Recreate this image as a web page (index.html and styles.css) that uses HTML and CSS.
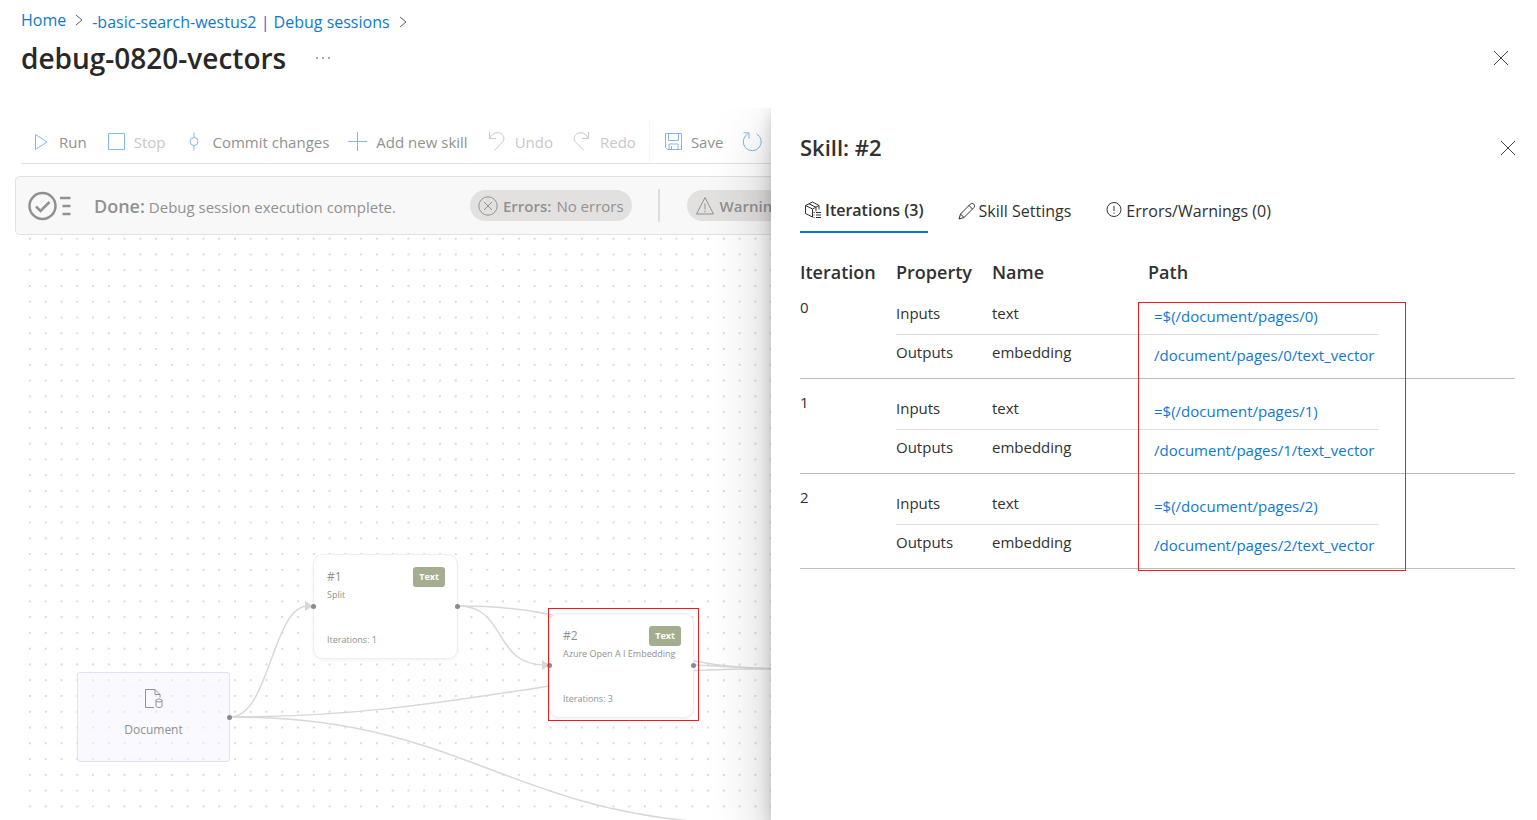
FILE: index.html
```html
<!DOCTYPE html>
<html lang="en">

<head>
  <meta charset="utf-8">
  <title>debug-0820-vectors</title>
  <link rel="stylesheet" href="styles.css">
</head>

<body>
  <header class="top">
    <nav class="crumbs">
      <a href="#">Home</a>
      <svg class="chev" viewBox="0 0 8 12"><path d="M1 1l6 5-6 5" /></svg>
      <a href="#" class="crumb-low">-basic-search-westus2 | Debug sessions</a>
      <svg class="chev crumb-low" viewBox="0 0 8 12"><path d="M1 1l6 5-6 5" /></svg>
    </nav>
    <div class="title-row">
      <h1>debug-0820-vectors</h1>
      <button class="more" aria-label="More"><svg viewBox="0 0 14 4"><circle cx="1" cy="2" r=".8" /><circle cx="7" cy="2" r=".8" /><circle cx="13" cy="2" r=".8" /></svg></button>
      <button class="close" aria-label="Close"><svg viewBox="0 0 14 14"><path d="M0 0l14 14M14 0L0 14" /></svg></button>
    </div>
  </header>

  <main class="main">
    <section class="work">
      <div class="toolbar">
        <button><svg viewBox="0 0 20 20"><path d="M4.500 2.500v15L16 10z" /></svg>Run</button>
        <button disabled><svg viewBox="0 0 20 20"><path d="M2.500 1.500h16v16h-16z" /></svg>Stop</button>
        <button><svg viewBox="0 0 20 20"><circle cx="10" cy="9.500" r="4" /><path d="M10 .5v5M10 13.500v5" /></svg>Commit changes</button>
        <button><svg viewBox="0 0 20 20"><path d="M0 9.500h19M9.500 0v19" /></svg>Add new skill</button>
        <button disabled><svg viewBox="0 0 20 20" class="off"><path d="M2.500 0v6.500H9M3 6C6 0 12-.5 15 2.500c3 3 2 6 0 8L7.500 18.500" /></svg>Undo</button>
        <button disabled><svg viewBox="0 0 20 20" class="off"><path d="M16.500 0v6.500H10M16 6C13 0 7-.5 4 2.500c-3 3-2 6 0 8l8 8" /></svg>Redo</button>
        <span class="sep"></span>
        <button><svg viewBox="0 0 20 20"><path d="M2.500 1.500h16v16H4.500l-2-2zM5.500 1.500v7h10v-7M6 17.500v-5.500h9v5.500M8.500 17v-3" /></svg>Save</button>
        <button aria-label="Refresh"><svg viewBox="0 0 20 20"><path d="M6 1.800a9 9 0 1 0 8.500 0M1.500 .8H7v5.700" /></svg></button>
      </div>

      <div class="status">
        <svg class="done-icon" viewBox="0 0 44 30"><circle cx="14.500" cy="15" r="13" /><path d="M8 15.500l4.500 4.500 9-9" /><path d="M32 7h10.500M34.500 15h8M34.500 23h8" /></svg>
        <p><b>Done:</b> Debug session execution complete.</p>
        <span class="pill"><svg viewBox="0 0 20 20"><circle cx="10" cy="10" r="9.200" /><path d="M6 6l8 8M14 6l-8 8" /></svg><b>Errors:</b> No errors</span>
        <span class="bar"></span>
        <span class="pill"><svg viewBox="0 0 20 20"><path d="M10 1.500L18.500 18h-17zM10 7.500v6M10 14.800v1.500" /></svg><b>Warnings:</b></span>
      </div>

      <div class="canvas">
        <svg class="edges">
          <defs>
            <pattern id="dots" x="29" y="2.700" width="15.770" height="15.770" patternUnits="userSpaceOnUse">
              <circle cx="0.700" cy="0.700" r="0.600" fill="#d6d6da" />
            </pattern>
          </defs>
          <rect class="grid" x="22" y="0" width="100%" height="100%" fill="url(#dots)" />
          <path d="M230 482C270 482 272 371 308 371" />
          <path d="M230 482C360 482 450 466 550 451" />
          <path d="M230 482C450 482 500 568 690 586" />
          <path d="M458 371C508 371 492 430 545 430" />
          <path d="M458 371C495 371 525 374 553 380" />
          <path d="M694 430C720 431 740 433 790 434M694 426C720 431 740 433 790 434M694 435.500C720 435 750 433 790 434" />
          <path class="tip" d="M305 366v10l8-5zM542 425v10l8-5z" />
        </svg>

        <div class="node doc">
          <svg viewBox="0 0 20 22"><path d="M10 19.500H1.500v-18h9.500l5 5v3M11 1.500v5h5" /><path d="M12 12.500v5.500c0 2 6 2 6 0v-5.500M12 12.500c0-2 6-2 6 0s-6 2-6 0z" /></svg>
          Document
          <i class="port out"></i>
        </div>

        <div class="node skill one">
          <div class="row"><span class="num">#1</span><span class="tag">Text</span></div>
          <span>Split</span>
          <span class="count">Iterations: 1</span>
          <i class="port in"></i><i class="port out"></i>
        </div>

        <div class="node skill two">
          <div class="row"><span class="num">#2</span><span class="tag">Text</span></div>
          <span>Azure Open A I Embedding</span>
          <span class="count">Iterations: 3</span>
          <i class="port in"></i><i class="port out"></i>
        </div>
        <div class="mark mark-node"></div>
      </div>
    </section>

    <aside class="panel">
      <div class="panel-head">
        <h2>Skill: #2</h2>
        <button class="close" aria-label="Close panel"><svg viewBox="0 0 14 14"><path d="M0 0l14 14M14 0L0 14" /></svg></button>
      </div>

      <div class="tabs">
        <button class="tab active"><svg viewBox="0 0 18 18"><path d="M8.500 16L1.500 12.500v-8L8.500 1l6.500 3.500v4M1.500 4.500l7 3.500L15 4.500M8.500 8v8M5 2.800l7 3.500v4M9.500 11.500h1M12 11.500h5M9.500 14h1M12 14h5M9.500 16.500h1M12 16.500h5" /></svg>Iterations (3)</button>
        <button class="tab"><svg viewBox="0 0 18 18"><path d="M1 17l1.500-5L12.500 2c2-2 5.500 1 3.500 3.500L6 15.500zM2.500 12L6 15.500M11 3.500L14.500 7" /></svg>Skill Settings</button>
        <button class="tab"><svg viewBox="0 0 18 18"><circle cx="9" cy="7.500" r="7" /><path d="M9 4v5M9 10.500v1.300" /></svg>Errors/Warnings (0)</button>
      </div>

      <div class="table-wrap">
        <table>
          <thead>
            <tr><th class="c-it">Iteration</th><th class="c-prop">Property</th><th class="c-name">Name</th><th class="c-path">Path</th><th></th></tr>
          </thead>
          <tbody>
            <tr><td rowspan="2" class="it">0</td><td>Inputs</td><td>text</td><td class="path"><a href="#">=$(/document/pages/0)</a></td><td rowspan="2"></td></tr>
            <tr><td>Outputs</td><td>embedding</td><td class="path"><a href="#">/document/pages/0/text_vector</a></td></tr>
          </tbody>
          <tbody>
            <tr><td rowspan="2" class="it">1</td><td>Inputs</td><td>text</td><td class="path"><a href="#">=$(/document/pages/1)</a></td><td rowspan="2"></td></tr>
            <tr><td>Outputs</td><td>embedding</td><td class="path"><a href="#">/document/pages/1/text_vector</a></td></tr>
          </tbody>
          <tbody>
            <tr><td rowspan="2" class="it">2</td><td>Inputs</td><td>text</td><td class="path"><a href="#">=$(/document/pages/2)</a></td><td rowspan="2"></td></tr>
            <tr><td>Outputs</td><td>embedding</td><td class="path"><a href="#">/document/pages/2/text_vector</a></td></tr>
          </tbody>
        </table>
        <div class="mark mark-path"></div>
      </div>
    </aside>
  </main>
</body>

</html>
```
FILE: styles.css
```css
* {
  box-sizing: border-box;
}

body {
  margin: 0;
  height: 100vh;
  display: flex;
  flex-direction: column;
  overflow: hidden;
  background: #fff;
  color: #323130;
  font: 15px/20px "Open Sans", "Noto Sans", sans-serif;
}

button {
  border: 0;
  padding: 0;
  background: none;
  color: inherit;
  font: inherit;
  white-space: nowrap;
}

svg {
  fill: none;
  stroke: currentColor;
  flex: none;
}

a {
  color: #0f78d4;
  text-decoration: none;
}

h1, h2, p {
  margin: 0;
}

/* header */
.top {
  position: relative;
  z-index: 2;
  flex: none;
  height: 108px;
  padding: 8px 29px 0 21px;
  background: #fff;
}

.crumbs {
  display: flex;
  align-items: center;
  gap: 9px;
  font-size: 16px;
}

.crumb-low {
  margin-top: 4px;
}

.chev {
  width: 8px;
  height: 12px;
  color: #605e5c;
}

.title-row {
  display: flex;
  align-items: center;
  padding-top: 6px;
}

h1 {
  font-size: 28px;
  line-height: 40px;
  font-weight: 600;
  color: #292827;
}

.more {
  margin-left: 30px;
}

.more svg {
  display: block;
  width: 14px;
  height: 4px;
  fill: #444;
  stroke: none;
}

.close {
  margin-left: auto;
}

.close svg {
  display: block;
  width: 14px;
  height: 14px;
  stroke: #444;
}

/* main area */
.main {
  flex: 1;
  min-height: 0;
  display: grid;
  grid-template-columns: 771fr 766fr;
}

.work {
  display: flex;
  flex-direction: column;
  min-width: 0;
  overflow: hidden;
  color: #919191;
}

.toolbar {
  display: flex;
  align-items: center;
  gap: 19px;
  flex: none;
  height: 56px;
  margin-left: 21px;
  padding: 12px 0 0 10px;
  border-bottom: 1px solid #e1e1e1;
}

.toolbar button {
  display: flex;
  align-items: center;
  gap: 8px;
}

.toolbar button:disabled {
  color: #c8c8c8;
}

.toolbar svg {
  width: 20px;
  height: 20px;
  color: #80b8ec;
}

.toolbar svg.off {
  color: #c8c8c8;
}

.sep {
  width: 1px;
  height: 43px;
  margin: 0 -6px;
  background: #f6f6f6;
}

.status {
  display: flex;
  align-items: center;
  flex: none;
  height: 59px;
  margin: 12px 0 0 15px;
  padding-left: 12px;
  border: 1px solid #e1e1e1;
  border-right: 0;
  border-radius: 5px 0 0 5px;
  background: #f8f8f8;
  white-space: nowrap;
}

.done-icon {
  width: 44px;
  height: 30px;
  stroke-width: 2.5;
}

.status p {
  flex: none;
  width: 376px;
  margin-left: 22px;
  padding-top: 2px;
}

.status p b {
  font-size: 18px;
}

b {
  font-weight: 600;
}

.pill {
  display: flex;
  align-items: center;
  gap: 5px;
  height: 31px;
  padding: 0 8px;
  border-radius: 16px;
  background: #e3e1e0;
}

.pill svg {
  width: 20px;
  height: 20px;
}

.bar {
  flex: none;
  width: 2px;
  height: 33px;
  margin: 0 27px 0 26px;
  background: #dedede;
}

/* graph */
.canvas {
  position: relative;
  flex: 1;
  overflow: hidden;
}

.edges {
  position: absolute;
  width: 100%;
  height: 100%;
  stroke: #d8d8da;
  stroke-width: 1.5;
}

.edges .grid {
  stroke: none;
}

.edges .tip {
  fill: #d8d8da;
  stroke: none;
}

.node {
  position: absolute;
  display: flex;
  flex-direction: column;
}

.doc {
  left: 77px;
  top: 437px;
  width: 153px;
  height: 90px;
  align-items: center;
  gap: 10px;
  padding-top: 15px;
  border: 1px solid #e4defa;
  border-radius: 3px;
  background: rgba(246, 243, 255, .5);
  font-size: 12px;
}

.doc svg {
  width: 20px;
  height: 22px;
}

.skill {
  width: 145px;
  height: 105px;
  padding: 12px 12px 11px 13px;
  border: 1px solid #eee;
  border-radius: 10px;
  background: #fff;
  box-shadow: 0 1px 3px rgba(0, 0, 0, .06);
  font-size: 9px;
  line-height: 14px;
}

.one {
  left: 313px;
  top: 319px;
}

.two {
  left: 549px;
  top: 378px;
}

.row {
  display: flex;
  justify-content: space-between;
  align-items: center;
  height: 20px;
  margin-bottom: 1px;
}

.num {
  font-size: 12px;
}

.tag {
  width: 32px;
  border-radius: 3px;
  background: #a5ad90;
  color: #fff;
  font-weight: 700;
  line-height: 20px;
  text-align: center;
}

.count {
  margin-top: auto;
}

.port {
  position: absolute;
  width: 5px;
  height: 5px;
  border-radius: 50%;
  background: #8a8890;
}

.skill .port {
  top: 49px;
}

.in {
  left: -3px;
}

.out {
  right: -3px;
}

.doc .out {
  top: 42px;
}

/* red callout frames */
.mark {
  position: absolute;
  border: 1px solid #ed1c24;
  pointer-events: none;
}

.mark-node {
  left: 548px;
  top: 373px;
  width: 151px;
  height: 113px;
}

.mark-path {
  left: 338px;
  top: 69px;
  width: 268px;
  height: 269px;
}

/* side panel */
.panel {
  position: relative;
  min-width: 0;
  padding: 24px 22px 0 29px;
  background: #fff;
  box-shadow: 0 26px 58px rgba(0, 0, 0, .22), 0 5px 14px rgba(0, 0, 0, .18);
}

.panel-head {
  display: flex;
  align-items: center;
  height: 32px;
}

h2 {
  padding-bottom: 2px;
  font-size: 22px;
  line-height: 30px;
  font-weight: 600;
}

.tabs {
  display: flex;
  gap: 26px;
  padding-top: 25px;
}

.tab {
  display: flex;
  align-items: center;
  gap: 3px;
  height: 44px;
  padding: 0 4px;
  font-size: 16px;
}

.tab svg {
  width: 18px;
  height: 18px;
}

.active {
  border-bottom: 2px solid #0078d4;
  font-weight: 600;
}

.table-wrap {
  position: relative;
  padding-top: 28px;
}

table {
  width: 100%;
  table-layout: fixed;
  border-collapse: separate;
  border-spacing: 0;
}

th {
  height: 23px;
  padding: 0;
  text-align: left;
  font-size: 18px;
  line-height: 23px;
  font-weight: 600;
}

.c-it, .c-prop {
  width: 96px;
}

.c-name {
  width: 156px;
}

.c-path {
  width: 231px;
}

td {
  height: 51px;
  padding: 19px 0 0;
  vertical-align: top;
  border-bottom: 1px solid #e1dfdd;
}

tr + tr td {
  height: 44px;
  padding-top: 7px;
}

td[rowspan], tr + tr td {
  border-bottom-color: #bebbb8;
}

td.it {
  padding-top: 13px;
}

td.path {
  padding: 22px 0 0 6px;
}

tr + tr td.path {
  padding-top: 10px;
}
```
